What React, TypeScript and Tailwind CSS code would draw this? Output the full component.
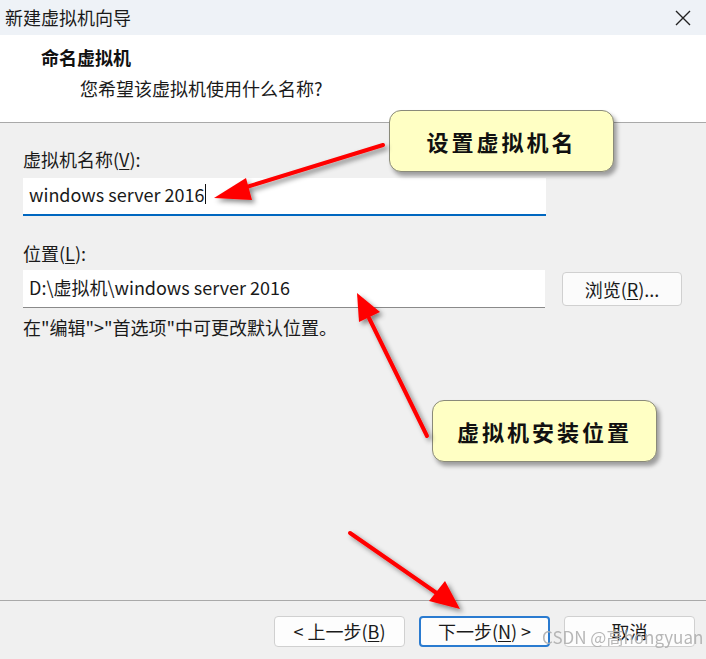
import React from "react";

const font = { fontFamily: '"Noto Sans CJK SC", "Noto Sans", sans-serif' };

function Btn({ children, primary }: { children: React.ReactNode; primary?: boolean }) {
  return (
    <div
      className={
        "flex h-[31px] w-[131px] items-center justify-center rounded-[4px] bg-[#fdfdfd] text-[18px] text-[#1a1a1a] " +
        (primary ? "border-2 border-[#2a7bd0]" : "border border-[#d0d0d0]")
      }
    >
      {children}
    </div>
  );
}

function Callout({ text, cls }: { text: string; cls: string }) {
  return (
    <div
      className={
        "absolute flex h-[62px] w-[225px] items-center justify-center rounded-[12px] border border-[#8a8a7a] bg-[#ffffc4] text-[22px] font-semibold tracking-[3px] text-[#111] shadow-[3px_4px_4px_rgba(0,0,0,0.35)] " +
        cls
      }
    >
      {text}
    </div>
  );
}

export default function App() {
  return (
    <div className="relative h-[659px] w-[706px] overflow-hidden bg-[#f0f0f0]" style={font}>
      {/* title bar */}
      <div className="flex h-[35px] items-center justify-between bg-[#eef2f7] pl-[5px] pr-[14px]">
        <span className="text-[18px] text-[#1a1a1a]">新建虚拟机向导</span>
        <svg width="16" height="16" viewBox="0 0 16 16" className="mr-[1px]">
          <path d="M1 1L15 15M15 1L1 15" stroke="#222" strokeWidth="1.4" />
        </svg>
      </div>
      {/* header */}
      <div className="flex h-[88px] flex-col border-b border-[#a9a9a9] bg-white pt-[8px]">
        <div className="pl-[41px] text-[18px] font-bold leading-[28px] text-[#111]">命名虚拟机</div>
        <div className="mt-[3px] pl-[80px] text-[18px] leading-[28px] text-[#1a1a1a]">您希望该虚拟机使用什么名称?</div>
      </div>
      {/* body */}
      <div className="flex h-[478px] flex-col border-b border-[#a9a9a9] pl-[23px] pt-[22px]">
        <div className="text-[18px] leading-[28px] text-[#1a1a1a]">
          虚拟机名称(<span className="underline underline-offset-2">V</span>):
        </div>
        <div className="mt-[5px] flex h-[38px] w-[523px] items-center border-b-2 border-[#0067c0] bg-white pb-[4px] pl-[6px] text-[18px] text-[#1a1a1a]">
          windows server 2016
          <span className="ml-[1px] inline-block h-[20px] w-[1px] bg-[#111]" />
        </div>
        <div className="mt-[23px] text-[18px] leading-[28px] text-[#1a1a1a]">
          位置(<span className="underline underline-offset-2">L</span>):
        </div>
        <div className="mt-[3px] flex items-center gap-[17px]">
          <div className="flex h-[38px] w-[522px] items-center border-b border-[#8a8a8a] bg-white pb-[3px] pl-[6px] text-[18px] text-[#1a1a1a]">
            D:\虚拟机\windows server 2016
          </div>
          <div className="flex h-[34px] w-[120px] items-center justify-center rounded-[4px] border border-[#d0d0d0] bg-[#fbfbfb] text-[18px] text-[#1a1a1a]">
            浏览(<span className="underline underline-offset-2">R</span>)...
          </div>
        </div>
        <div className="mt-[5px] text-[18px] leading-[28px] text-[#1a1a1a]">在"编辑"&gt;"首选项"中可更改默认位置。</div>
      </div>
      {/* footer */}
      <div className="flex items-center justify-end gap-[14px] pr-[11px] pt-[15px]">
        <Btn>
          &lt; 上一步(<span className="underline underline-offset-2">B</span>)
        </Btn>
        <Btn primary>
          下一步(<span className="underline underline-offset-2">N</span>) &gt;
        </Btn>
        <Btn>取消</Btn>
      </div>

      {/* annotations */}
      <Callout text="设置虚拟机名" cls="left-[389px] top-[110px]" />
      <Callout text="虚拟机安装位置" cls="left-[432px] top-[400px]" />
      <svg className="pointer-events-none absolute left-0 top-0" width="706" height="659" viewBox="0 0 706 659">
        <defs>
          <filter id="sh" x="-20%" y="-20%" width="140%" height="140%">
            <feDropShadow dx="3" dy="3" stdDeviation="2.5" floodColor="#000" floodOpacity="0.45" />
          </filter>
        </defs>
        <g filter="url(#sh)" fill="#ff0000" stroke="#ff0000" strokeWidth="4" strokeLinecap="round">
          <line x1="383" y1="145" x2="240" y2="189" />
          <polygon points="214,198 246,178 252,200" stroke="none" />
          <line x1="427" y1="436" x2="369" y2="318" />
          <polygon points="357,293 380,312 359,322" stroke="none" />
          <line x1="350" y1="533" x2="438" y2="594" />
          <polygon points="460,609 429,601 445,581" stroke="none" />
        </g>
      </svg>
      <div className="pointer-events-none absolute left-[542px] top-[624px] text-[17px] text-[#b0b0b0] opacity-90">
        CSDN @高hongyuan
      </div>
    </div>
  );
}
